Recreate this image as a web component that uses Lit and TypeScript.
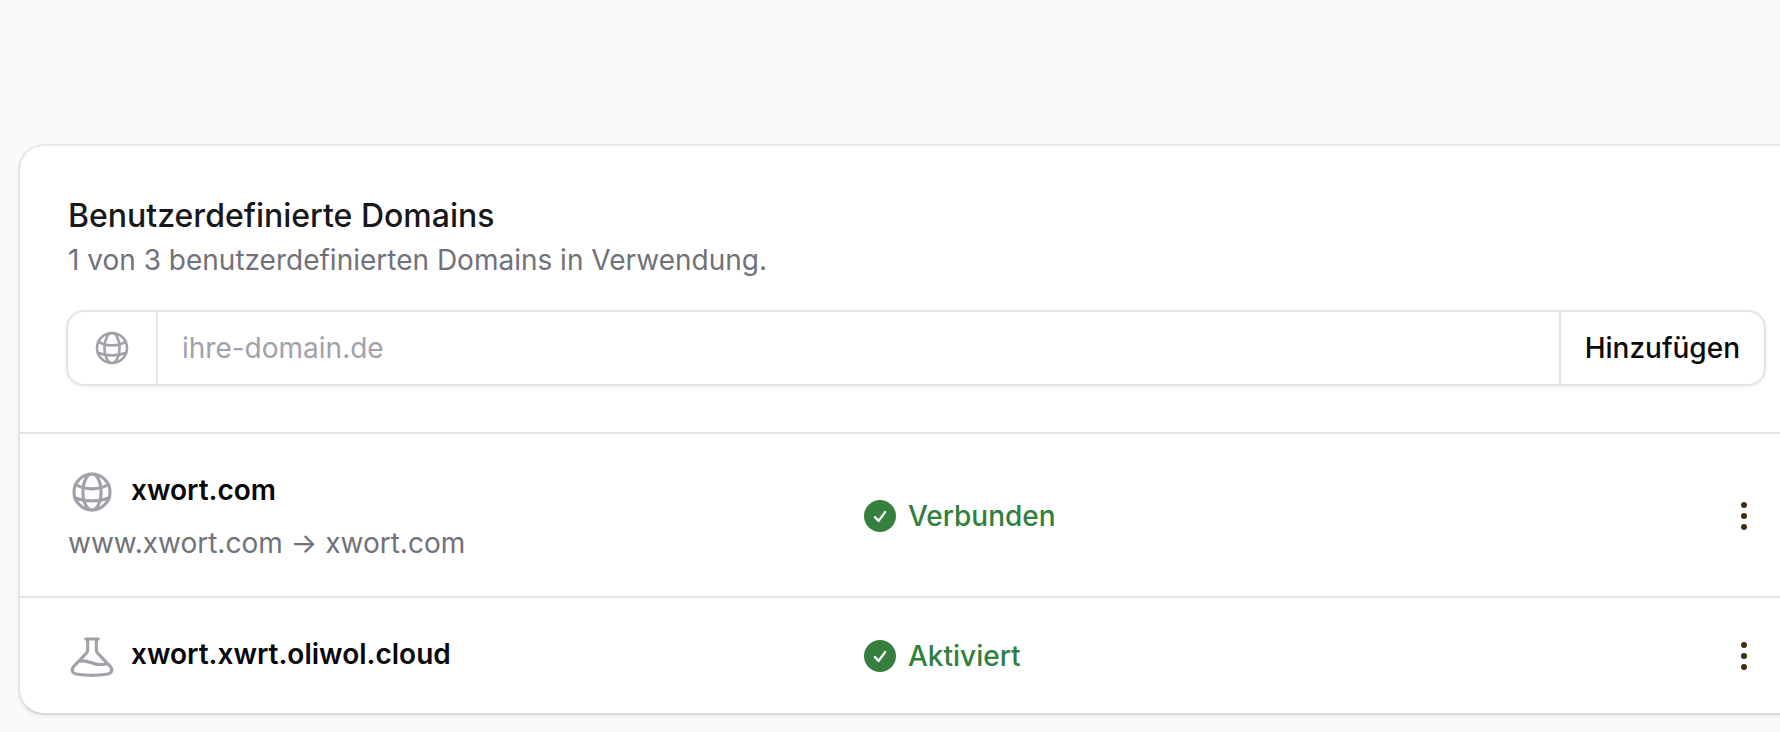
import { LitElement, html, css, svg } from "lit";
import { customElement, property, state } from "lit/decorators.js";

const GLOBE = svg`
  <circle cx="10" cy="10" r="7.5" />
  <ellipse cx="10" cy="10" rx="3.8" ry="7.5" />
  <path d="M3.1 6.8C5.2 8.2 7.5 8.7 10 8.7s4.8-.5 6.900-1.900M2.900 12.400C5 13.300 7.500 13.700 10 13.700s5-.4 7.100-1.300" />`;

const FLASK = svg`
  <path d="M7.400 2.900h5.200M8.200 2.900v4.700c0 .4-.2.800-.5 1.200L2.500 14.200c-.7.800-1 1.700-.5 2.500.4.600 1.100.8 1.900.9 4 .6 8.200.6 12.200 0 .8-.1 1.500-.3 1.900-.9.500-.8.200-1.700-.5-2.500l-5.200-5.400c-.3-.4-.5-.8-.5-1.200V2.900M4.700 12.100c1.900-.3 3.400.1 4.800.6 1.900.8 4.400 1.200 6.900.4" />`;

@customElement("line-icon")
class LineIcon extends LitElement {
  @property() name = "globe";

  static styles = css`
    :host {
      display: block;
      flex: none;
      color: #a1a1aa;
    }
    .glyph {
      display: block;
      width: 100%;
      height: 100%;
      fill: none;
      stroke: currentColor;
      stroke-width: 1.3;
      stroke-linecap: round;
      stroke-linejoin: round;
    }
  `;

  render() {
    return html`<svg class="glyph" viewBox="0 0 20 20" aria-hidden="true">
      ${this.name === "flask" ? FLASK : GLOBE}
    </svg>`;
  }
}

interface Domain {
  icon: string;
  name: string;
  redirect?: string;
  status: string;
}

@customElement("app-root")
class AppRoot extends LitElement {
  @state() private domains: Domain[] = [
    { icon: "globe", name: "xwort.com", redirect: "www.xwort.com → xwort.com", status: "Verbunden" },
    { icon: "flask", name: "xwort.xwrt.oliwol.cloud", status: "Aktiviert" },
  ];

  static styles = css`
    :host {
      display: block;
      box-sizing: border-box;
      min-height: 100vh;
      padding: 144px 0 16px 18px;
      overflow: hidden;
      background: #fafafa;
      color: #09090b;
      font: 400 28px/44px Inter, "Liberation Sans", sans-serif;
    }
    .card {
      margin-right: -34px;
      border: 2px solid #e4e4e7;
      border-color: #e9e9ea #e4e4e5 #d9d9da;
      border-radius: 26px;
      background: #fff;
      box-shadow: 0 2px 4px rgba(0, 0, 0, 0.06);
    }
    .head {
      padding: 48px;
    }
    .title {
      margin: 0;
      font-size: 32px;
      font-weight: 500;
      color: #18181b;
    }
    .usage {
      margin: 0 0 28px;
      color: #71717a;
    }
    .form {
      display: flex;
      height: 72px;
      margin: 0 -2px -2px;
      border: 2px solid #e4e4e5;
      border-radius: 18px;
      box-shadow: 0 2px 4px rgba(0, 0, 0, 0.05);
    }
    .prefix {
      display: flex;
      align-items: center;
      padding: 0 24px;
      border-right: 2px solid #e4e4e5;
    }
    .prefix line-icon {
      width: 40px;
      height: 40px;
    }
    .field {
      flex: 1;
      min-width: 0;
      padding: 0 24px;
      border: 0;
      outline: 0;
      background: none;
      font: inherit;
      color: inherit;
    }
    .field::placeholder {
      color: #a1a1aa;
      opacity: 1;
    }
    .add {
      padding: 0 24px;
      border: 0;
      border-left: 2px solid #e4e4e5;
      background: none;
      font: inherit;
      font-weight: 500;
      color: inherit;
      cursor: pointer;
    }
    .list {
      margin: 0;
      padding: 0;
      list-style: none;
    }
    .row {
      display: grid;
      grid-template-columns: 1fr 1fr 104px;
      align-items: center;
      padding: 32px 48px 31px;
      border-top: 2px solid #e4e4e5;
    }
    .name {
      display: flex;
      align-items: center;
      gap: 15px;
      height: 52px;
      font-weight: 600;
    }
    .name line-icon {
      width: 48px;
      height: 48px;
    }
    .label {
      padding-bottom: 4px;
    }
    .redirect {
      margin: 3px 0 0;
      color: #71717a;
    }
    .status {
      display: flex;
      align-items: center;
      gap: 12px;
      font-weight: 500;
      color: #317f3d;
    }
    .badge {
      width: 32px;
      height: 32px;
      fill: none;
      stroke: #fff;
      stroke-width: 2.4;
      stroke-linecap: round;
      stroke-linejoin: round;
    }
    .disc {
      fill: #35803f;
      stroke: none;
    }
    .more {
      justify-self: end;
      width: 40px;
      height: 48px;
      padding: 0;
      border: 0;
      background: none;
      color: #422d0b;
      cursor: pointer;
    }
    .dots {
      display: block;
      width: 40px;
      height: 48px;
      fill: currentColor;
    }
  `;

  private renderRow(d: Domain) {
    return html`<li class="row">
      <div>
        <div class="name">
          <line-icon name=${d.icon}></line-icon>
          <span class="label">${d.name}</span>
        </div>
        ${d.redirect ? html`<p class="redirect">${d.redirect}</p>` : null}
      </div>
      <div class="status">
        <svg class="badge" viewBox="0 0 32 32" aria-hidden="true">
          <circle class="disc" cx="16" cy="16" r="16" />
          <path d="M11 17.200l3.600 3.700 6.500-8.800" />
        </svg>
        <span>${d.status}</span>
      </div>
      <button class="more" type="button" aria-label="Optionen für ${d.name}">
        <svg class="dots" viewBox="0 0 40 48" aria-hidden="true">
          <circle cx="20" cy="13" r="3" />
          <circle cx="20" cy="24" r="3" />
          <circle cx="20" cy="35" r="3" />
        </svg>
      </button>
    </li>`;
  }

  render() {
    return html`<section class="card">
      <div class="head">
        <h2 class="title">Benutzerdefinierte Domains</h2>
        <p class="usage">1 von 3 benutzerdefinierten Domains in Verwendung.</p>
        <form class="form" @submit=${(e: Event) => e.preventDefault()}>
          <label class="prefix" for="domain" aria-label="Domain"><line-icon name="globe"></line-icon></label>
          <input class="field" id="domain" type="text" placeholder="ihre-domain.de" />
          <button class="add" type="submit">Hinzufügen</button>
        </form>
      </div>
      <ul class="list">
        ${this.domains.map((d) => this.renderRow(d))}
      </ul>
    </section>`;
  }
}
